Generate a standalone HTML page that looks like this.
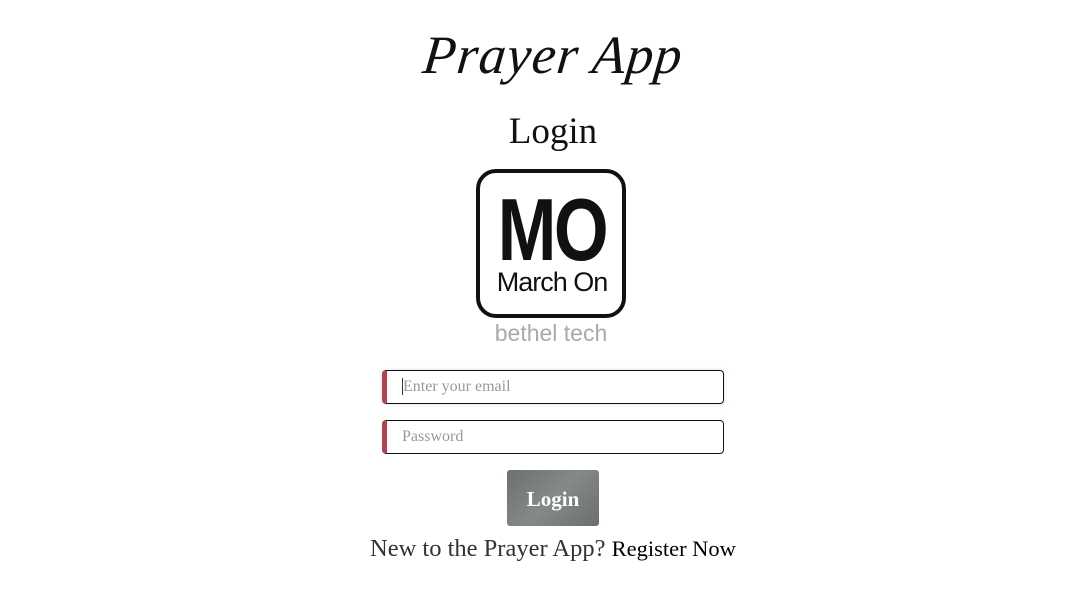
<!DOCTYPE html>
<html><head><meta charset="utf-8"><style>
body{margin:0;width:1092px;height:591px;background:#fff;position:relative;font-family:"Liberation Serif",serif;overflow:hidden}
.a{position:absolute}
.title{left:0;width:1106px;top:24px;text-align:center;font-size:54px;font-style:italic;font-family:"Liberation Serif",serif;color:#111;letter-spacing:1px;transform:skewX(-6deg)}
.login{left:0;width:1106px;top:110px;text-align:center;font-size:37px;color:#111}
.logo{left:476px;top:169px;width:142px;height:141px;border:4px solid #111;border-radius:20px}
.mo{left:476px;top:186px;width:152px;text-align:center;font-family:"Liberation Sans",sans-serif;font-weight:bold;font-size:88px;line-height:88px;transform:scaleX(0.8);letter-spacing:-3px;color:#111}
.mar{left:476px;top:267px;width:152px;text-align:center;font-family:"Liberation Sans",sans-serif;font-size:27px;letter-spacing:-1px;color:#111}
.bt{left:476px;top:320px;width:150px;text-align:center;font-family:"Liberation Sans",sans-serif;font-size:23px;color:#aaa;font-weight:300}
.in{left:382px;border:1px solid #111;border-left:5px solid #b5414a;border-radius:4px;box-sizing:border-box;width:342px;height:34px;font-size:16px;color:#999;padding:7px 0 0 15px}
.btn{left:507px;top:470px;width:92px;height:56px;border-radius:3px;background:linear-gradient(135deg,#6c716e,#858a87 50%,#6a6f6c);color:#fff;font-size:21px;font-weight:bold;text-align:center;line-height:58px}
.reg{left:0;width:1106px;top:535px;text-align:center;font-size:24.5px;color:#333}
</style></head><body>
<div class="a title">Prayer App</div>
<div class="a login">Login</div>
<div class="a logo"></div>
<div class="a mo">MO</div>
<div class="a mar">March On</div>
<div class="a bt">bethel tech</div>
<div class="a in" style="top:370px;box-shadow:0 0 4px #cfe0f5"><span style="border-left:1px solid #333">Enter your email</span></div>
<div class="a in" style="top:420px">Password</div>
<div class="a btn">Login</div>
<div class="a reg">New to the Prayer App? <span style="color:#000;font-size:22.5px">Register Now</span></div>
</body></html>
